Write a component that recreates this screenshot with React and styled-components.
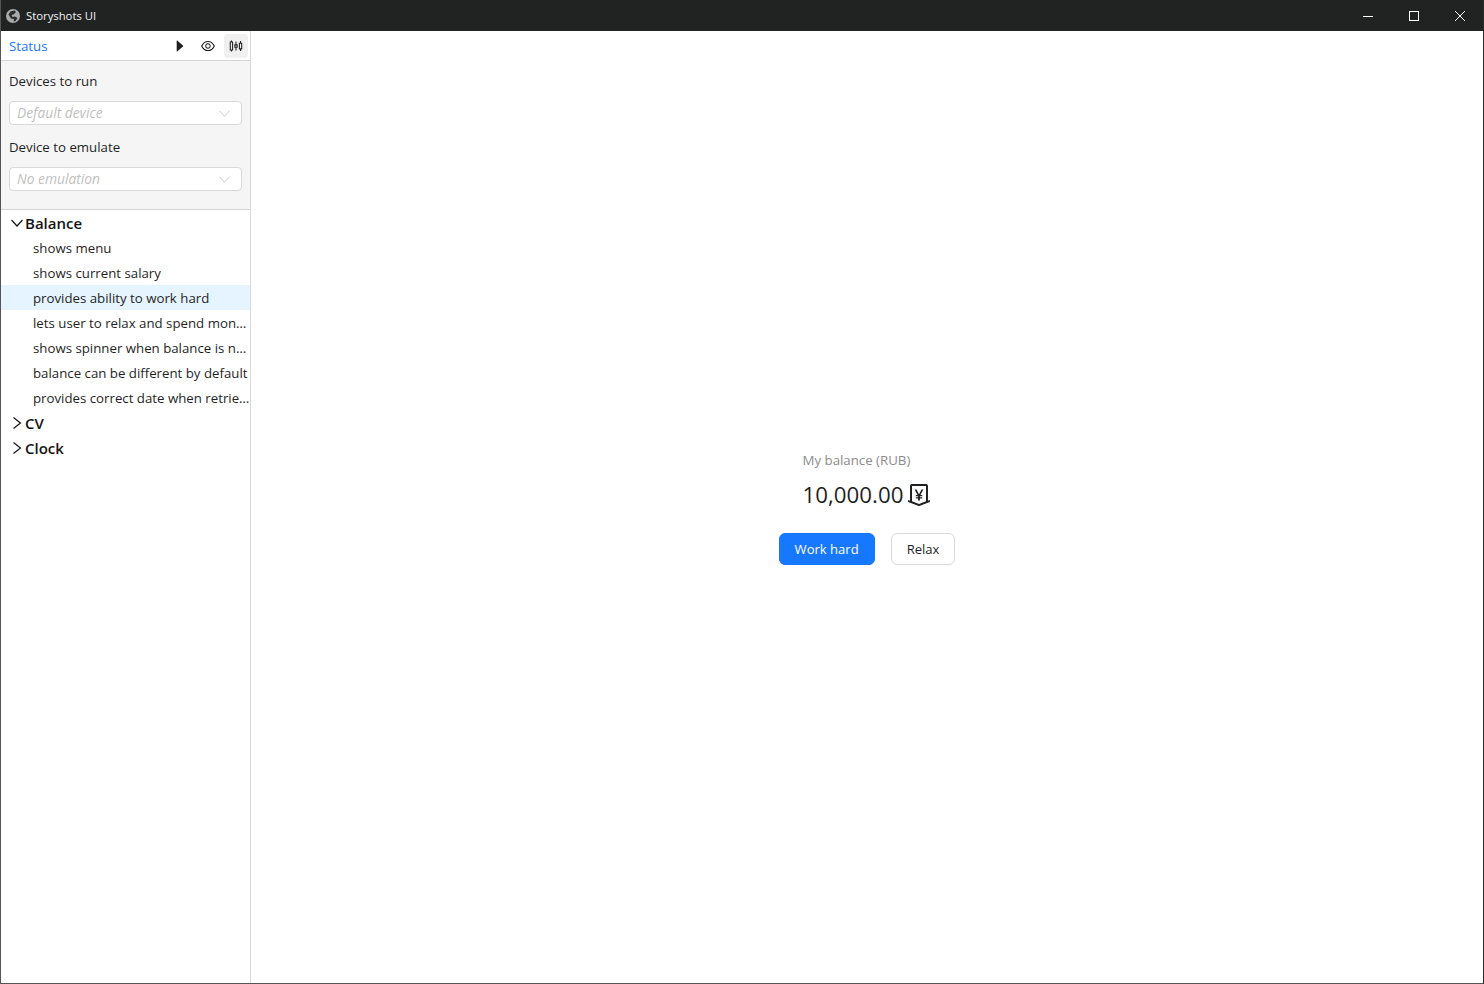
import React from "react";
import styled, { createGlobalStyle } from "styled-components";
import { AiFillCaretRight, AiOutlineEye, AiOutlineSliders, AiOutlineMoneyCollect } from "react-icons/ai";

const Global = createGlobalStyle`
  html, body { margin: 0; padding: 0; height: 100%; background: #fff; }
  #root { height: 100%; }
  * { box-sizing: border-box; }
  body { font-family: "Open Sans", "Noto Sans", sans-serif; font-size: 13.25px; color: #1f1f1f; }
`;

const Window = styled.div`
  width: 1484px; height: 984px; display: flex; flex-direction: column;
  background: #fff; border-left: 1px solid #555; border-right: 1px solid #2a2a2a; border-bottom: 1px solid #555;
  overflow: hidden;
`;
const TitleBar = styled.header`
  height: 31px; flex: none; background: #202322; color: #f2f2f2; display: flex; align-items: center;
  margin-left: -1px; margin-right: -1px; padding-left: 6px; padding-right: 1px; font-size: 11.3px;
`;
const AppName = styled.span`margin-left: 6px; flex: 1;`;
const WinButton = styled.button`
  width: 46px; height: 31px; border: 0; background: transparent; padding: 0; display: flex; align-items: center; justify-content: center; color: #fff;
`;
const Body = styled.div`flex: 1; display: flex; min-height: 0;`;
const Sidebar = styled.aside`width: 250px; flex: none; border-right: 1px solid #d9d9d9; display: flex; flex-direction: column;`;
const StatusBar = styled.div`
  height: 30px; flex: none; display: flex; align-items: center; padding-left: 8px; padding-right: 2px; border-bottom: 1px solid #d4d4d4;
`;
const StatusLabel = styled.span`color: #1677ff; flex: 1; margin-top: 1px;`;
const ToolButton = styled.button`
  width: 24px; height: 24px; margin-left: 4px; border: 0; padding: 0; border-radius: 4px; display: flex; align-items: center; justify-content: center;
  background: ${p => (p.$active ? "#f0f0f0" : "transparent")}; color: #1f1f1f; font-size: 16px;
`;
const Settings = styled.section`
  height: 149px; flex: none; background: #f5f5f5; border-bottom: 1px solid #d4d4d4; padding: 10px 8px 0;
`;
const FieldLabel = styled.div`height: 20px; line-height: 20px;`;
const Select = styled.div`
  height: 24px; margin: 10px 0 12px; background: #fff; border: 1px solid #d9d9d9; border-radius: 4px; display: flex; align-items: center; justify-content: space-between;
  padding: 0 11px 0 7px;
`;
const Placeholder = styled.span`color: #bfbfbf; font-style: italic; font-size: 13.8px; margin-top: -2px;`;
const Tree = styled.div`flex: 1;`;
const Group = styled.div`
  height: 25px; display: flex; align-items: center; padding-left: 10px; font-size: 15px; font-weight: 600; color: #141414; gap: 2px;
`;
const Item = styled.div`
  height: 25px; line-height: 25px; padding: 1px 0 0 32px; white-space: nowrap;
  background: ${p => (p.$selected ? "#e6f4ff" : "transparent")};
`;
const Main = styled.main`flex: 1; display: flex; flex-direction: column; align-items: center; justify-content: center; padding-top: 1px;`;
const Stat = styled.div`display: flex; flex-direction: column; align-items: flex-start; margin-left: 2px;`;
const BalanceLabel = styled.div`color: #8c8c8c; line-height: 20px;`;
const Amount = styled.div`
  display: flex; align-items: center; gap: 2px; font-size: 22.3px; line-height: 32px; margin-top: 9px; color: #1f1f1f;
  svg { font-size: 28px; }
`;
const Actions = styled.div`display: flex; gap: 16px; margin-top: 22px;`;
const Button = styled.button`
  height: 32px; border-radius: 6px; font: inherit; font-size: 13.05px; padding: 0 15px;
  border: 1px solid ${p => (p.$primary ? "#1677ff" : "#d9d9d9")};
  background: ${p => (p.$primary ? "#1677ff" : "#fff")};
  color: ${p => (p.$primary ? "#fff" : "#1f1f1f")};
`;

const Chevron = ({ dir = "down", color = "#141414", size = 12, weight = 1.2 }) => (
  <svg width={size} height={size} viewBox="0 0 12 12" fill="none" stroke={color} strokeWidth={weight}>
    {dir === "down" ? <path d="M.5 3 6 9 11.5 3" /> : <path d="M2.5 .5 9.5 6 2.5 11.5" />}
  </svg>
);

const Globe = () => (
  <svg width="14" height="14" viewBox="0 0 14 14">
    <circle cx="7" cy="7" r="7" fill="#a9abab" />
    <path d="M2.5 5.5 4.5 2.5 8.5 1.5 10 3 7.5 5.5 5.5 6 6.5 8 9 7.5 11.5 9 9.5 12 7.5 12.5 8 10 5 9.5z" fill="#2a2c2c" />
  </svg>
);

export default function App() {
  return (
    <Window>
      <Global />
      <TitleBar>
        <Globe />
        <AppName>Storyshots UI</AppName>
        <WinButton aria-label="Minimize"><svg width="10" height="10" viewBox="0 0 10 10"><path d="M0 5.5h10" stroke="#fff" /></svg></WinButton>
        <WinButton aria-label="Maximize"><svg width="10" height="10" viewBox="0 0 10 10"><rect x=".5" y=".5" width="9" height="9" fill="none" stroke="#fff" /></svg></WinButton>
        <WinButton aria-label="Close"><svg width="10" height="10" viewBox="0 0 10 10"><path d="M0 0l10 10M10 0L0 10" stroke="#fff" /></svg></WinButton>
      </TitleBar>
      <Body>
        <Sidebar>
          <StatusBar>
            <StatusLabel>Status</StatusLabel>
            <ToolButton aria-label="Run"><AiFillCaretRight /></ToolButton>
            <ToolButton aria-label="Preview"><AiOutlineEye /></ToolButton>
            <ToolButton $active aria-label="Options"><AiOutlineSliders /></ToolButton>
          </StatusBar>
          <Settings>
            <FieldLabel>Devices to run</FieldLabel>
            <Select><Placeholder>Default device</Placeholder><Chevron color="#c4c4c4" size={11} weight={1} /></Select>
            <FieldLabel>Device to emulate</FieldLabel>
            <Select><Placeholder>No emulation</Placeholder><Chevron color="#c4c4c4" size={11} weight={1} /></Select>
          </Settings>
          <Tree>
            <Group><Chevron />Balance</Group>
            <Item>shows menu</Item>
            <Item>shows current salary</Item>
            <Item $selected>provides ability to work hard</Item>
            <Item>lets user to relax and spend mon…</Item>
            <Item>shows spinner when balance is n…</Item>
            <Item>balance can be different by default</Item>
            <Item>provides correct date when retrie…</Item>
            <Group><Chevron dir="right" />CV</Group>
            <Group><Chevron dir="right" />Clock</Group>
          </Tree>
        </Sidebar>
        <Main>
          <Stat>
            <BalanceLabel>My balance (RUB)</BalanceLabel>
            <Amount>10,000.00<AiOutlineMoneyCollect /></Amount>
          </Stat>
          <Actions>
            <Button $primary>Work hard</Button>
            <Button>Relax</Button>
          </Actions>
        </Main>
      </Body>
    </Window>
  );
}
